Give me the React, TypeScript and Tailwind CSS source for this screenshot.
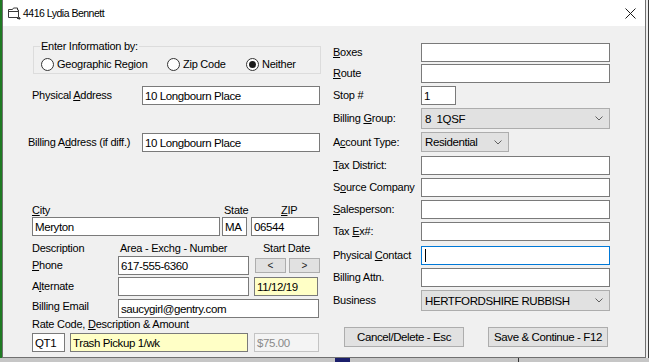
import React from "react";

const lbl = "text-[11px] leading-[13px] tracking-[-0.25px] text-black whitespace-nowrap";
const txt = "text-[11.5px] leading-[14px] tracking-[-0.4px] whitespace-pre";

interface BoxProps {
  w: string;
  value?: string;
  tone?: "white" | "yellow" | "off";
  focused?: boolean;
  className?: string;
}

const TextBox: React.FC<BoxProps> = ({ w, value = "", tone = "white", focused = false, className = "" }) => {
  const bg =
    tone === "yellow"
      ? "bg-[#ffffc6] border-[#7a7a7a]"
      : tone === "off"
      ? "bg-[#f4f4f4] border-[#c4c4c4]"
      : focused
      ? "bg-white border-[#0078d7]"
      : "bg-white border-[#7a7a7a]";
  return (
    <div className={`${w} h-[19px] shrink-0 border ${bg} flex items-center pl-[2px] ${className}`}>
      {focused && <span className="w-[1px] h-[13px] bg-black ml-[1px]" />}
      <span className={`${txt} ${tone === "off" ? "text-[#8a8a8a]" : "text-black"}`}>{value}</span>
    </div>
  );
};

const Combo: React.FC<{ w: string; value: string; h?: string }> = ({ w, value, h = "h-[21px]" }) => (
  <div className={`${w} ${h} shrink-0 border border-[#adadad] bg-[#e1e1e1] flex items-center pl-[3px] pr-[6px]`}>
    <span className={`${txt} text-black flex-1`}>{value}</span>
    <svg width="8" height="5" viewBox="0 0 8 5" fill="none">
      <polyline points="0.5,0.5 4,4 7.5,0.5" stroke="#606060" strokeWidth="1" />
    </svg>
  </div>
);

const Radio: React.FC<{ label: string; checked?: boolean; w?: string }> = ({ label, checked = false, w = "" }) => (
  <div className={`${w} flex items-center`}>
    <div className="w-[13px] h-[13px] rounded-full border border-[#333] bg-white flex items-center justify-center">
      {checked && <div className="w-[7px] h-[7px] rounded-full bg-[#1a1a1a]" />}
    </div>
    <span className={`${lbl} ml-[3px]`}>{label}</span>
  </div>
);

const Btn: React.FC<{ w: string; h: string; className?: string; children: React.ReactNode }> = ({ w, h, className = "", children }) => (
  <div className={`${w} ${h} shrink-0 border border-[#adadad] bg-[#e1e1e1] flex items-center justify-center ${className}`}>
    {children}
  </div>
);

const RightRow: React.FC<{ mt: string; label: React.ReactNode; children: React.ReactNode }> = ({ mt, label, children }) => (
  <div className={`${mt} flex items-center`}>
    <div className={`${lbl} w-[88px]`}>{label}</div>
    {children}
  </div>
);

export default function App() {
  return (
    <div className="w-[649px] h-[362px] flex flex-col bg-[#c6c6c6] overflow-hidden font-['Liberation_Sans',Arial,sans-serif]">
      <div className="flex h-[358px]">
        <div className="w-[2px] bg-[#1f7a23]" />
        <div className="w-[644px] border-l border-r border-b border-[#707070] bg-[#f0f0f0] flex flex-col">
          {/* title bar */}
          <div className="h-[26px] bg-white flex items-center pl-[4px]">
            <svg width="14" height="14" viewBox="0 0 14 14" fill="none" stroke="#3a3a3a" strokeWidth="1">
              <path d="M1.5 3.5h4l1-1.5h4v2h1v7.5h-10z" />
              <path d="M1.5 5.5h10" />
              <path d="M10 12.5h3M12 11l1.2 1.5-1.2 1.2" />
            </svg>
            <span className="ml-[2px] text-[10.5px] tracking-[-0.5px] leading-[14px] text-black">4416 Lydia Bennett</span>
            <svg className="ml-auto mr-[9px]" width="11" height="11" viewBox="0 0 11 11" stroke="#1a1a1a" strokeWidth="1">
              <path d="M0.5 0.5L10.5 10.5M10.5 0.5L0.5 10.5" />
            </svg>
          </div>

          {/* body */}
          <div className="flex flex-1">
            {/* left column */}
            <div className="w-[327px] flex flex-col pl-[29px]">
              <fieldset className="ml-[1px] mt-[14px] w-[288px] border border-[#dcdcdc] px-[6px] pb-[2px]">
                <legend className={`${lbl} px-[1px]`}>Enter Information by:</legend>
                <div className="mt-[4px] h-[14px] flex items-center pl-[1px]">
                  <Radio w="w-[126px]" label="Geographic Region" />
                  <Radio w="w-[79px]" label="Zip Code" />
                  <Radio label="Neither" checked />
                </div>
              </fieldset>

              <div className="mt-[12px] h-[19px] flex items-center">
                <div className={`${lbl} w-[110px]`}>
                  Physical <u>A</u>ddress
                </div>
                <TextBox w="w-[178px]" value="10 Longbourn Place" />
              </div>

              <div className="mt-[28px] h-[19px] flex items-center">
                <div className={`${lbl} -ml-[4px] w-[114px]`}>
                  Billing A<u>d</u>dress (if diff.)
                </div>
                <TextBox w="w-[178px]" value="10 Longbourn Place" />
              </div>

              <div className="mt-[52px] h-[13px] flex">
                <div className={`${lbl} w-[192px]`}>
                  <u>C</u>ity
                </div>
                <div className={`${lbl} w-[57px]`}>State</div>
                <div className={lbl}>
                  <u>Z</u>IP
                </div>
              </div>
              <div className="h-[19px] flex items-center">
                <TextBox w="w-[188px]" value="Meryton" />
                <TextBox w="w-[25px]" value="MA" className="ml-[2px]" />
                <TextBox w="w-[68px]" value="06544" className="ml-[4px]" />
              </div>

              <div className="mt-[6px] h-[13px] flex">
                <div className={`${lbl} w-[88px]`}>Description</div>
                <div className={`${lbl} w-[143px]`}>Area - Exchg - Number</div>
                <div className={lbl}>Start Date</div>
              </div>

              <div className="mt-[1px] h-[19px] flex items-center">
                <div className={`${lbl} w-[86px]`}>
                  <u>P</u>hone
                </div>
                <TextBox w="w-[131px]" value="617-555-6360" />
                <Btn w="w-[31px]" h="h-[15px]" className="ml-[6px]">
                  <span className="text-[10px] leading-[10px] text-[#222]">&lt;</span>
                </Btn>
                <Btn w="w-[31px]" h="h-[15px]" className="ml-[3px]">
                  <span className="text-[10px] leading-[10px] text-[#222]">&gt;</span>
                </Btn>
              </div>

              <div className="mt-[2px] h-[19px] flex items-center">
                <div className={`${lbl} w-[86px]`}>
                  A<u>l</u>ternate
                </div>
                <TextBox w="w-[131px]" />
                <TextBox w="w-[64px]" value="11/12/19" tone="yellow" className="ml-[5px]" />
              </div>

              <div className="mt-[3px] h-[19px] flex items-start">
                <div className={`${lbl} w-[86px] pt-[1px]`}>Billing Email</div>
                <TextBox w="w-[201px]" value="saucygirl@gentry.com" />
              </div>

              <div className={`${lbl} h-[13px]`}>
                Rate Code, <u>D</u>escription &amp; Amount
              </div>

              <div className="mt-[2px] h-[19px] flex items-center">
                <TextBox w="w-[33px]" value="QT1" />
                <TextBox w="w-[178px]" value="Trash Pickup 1/wk" tone="yellow" className="ml-[5px]" />
                <TextBox w="w-[65px]" value="$75.00" tone="off" className="ml-[6px]" />
              </div>
            </div>

            {/* right column */}
            <div className="flex-1 flex flex-col pl-[3px]">
              <RightRow mt="mt-[17px]" label={<><u>B</u>oxes</>}>
                <TextBox w="w-[189px]" />
              </RightRow>
              <RightRow mt="mt-[2px]" label={<><u>R</u>oute</>}>
                <TextBox w="w-[189px]" />
              </RightRow>
              <RightRow mt="mt-[3px]" label="Stop #">
                <TextBox w="w-[35px]" value="1" />
              </RightRow>
              <RightRow mt="mt-[3px]" label={<>Billing <u>G</u>roup:</>}>
                <Combo w="w-[189px]" value="8  1QSF" />
              </RightRow>
              <RightRow mt="mt-[3px]" label={<>A<u>c</u>count Type:</>}>
                <Combo w="w-[88px]" h="h-[20px]" value="Residential" />
              </RightRow>
              <RightRow mt="mt-[4px]" label={<><u>T</u>ax District:</>}>
                <TextBox w="w-[189px]" />
              </RightRow>
              <RightRow mt="mt-[3px]" label={<>S<u>o</u>urce Company</>}>
                <TextBox w="w-[189px]" />
              </RightRow>
              <RightRow mt="mt-[3px]" label={<><u>S</u>alesperson:</>}>
                <TextBox w="w-[189px]" />
              </RightRow>
              <RightRow mt="mt-[3px]" label={<>Tax <u>E</u>x#:</>}>
                <TextBox w="w-[189px]" />
              </RightRow>
              <RightRow mt="mt-[5px]" label={<>Physical <u>C</u>ontact</>}>
                <TextBox w="w-[189px]" focused />
              </RightRow>
              <RightRow mt="mt-[3px]" label="Billing Attn.">
                <TextBox w="w-[189px]" />
              </RightRow>
              <RightRow mt="mt-[3px]" label="Business">
                <Combo w="w-[189px]" value="HERTFORDSHIRE RUBBISH" />
              </RightRow>

              <div className="mt-[16px] flex">
                <Btn w="w-[120px]" h="h-[20px]" className="ml-[11px]">
                  <span className={`${txt} text-black`}>Cancel/Delete - Esc</span>
                </Btn>
                <Btn w="w-[120px]" h="h-[20px]" className="ml-[24px]">
                  <span className={`${txt} text-black`}>Save &amp; Continue - F12</span>
                </Btn>
              </div>
            </div>
          </div>
        </div>
        <div className="flex-1 bg-[#ececec] border-r border-[#3a3a3a]" />
      </div>
      <div className="flex-1 flex">
        <div className="w-[335px]" />
        <div className="w-[15px] bg-[#1b1f6b]" />
        <div className="w-[168px]" />
        <div className="w-[1px] bg-[#333]" />
      </div>
    </div>
  );
}
